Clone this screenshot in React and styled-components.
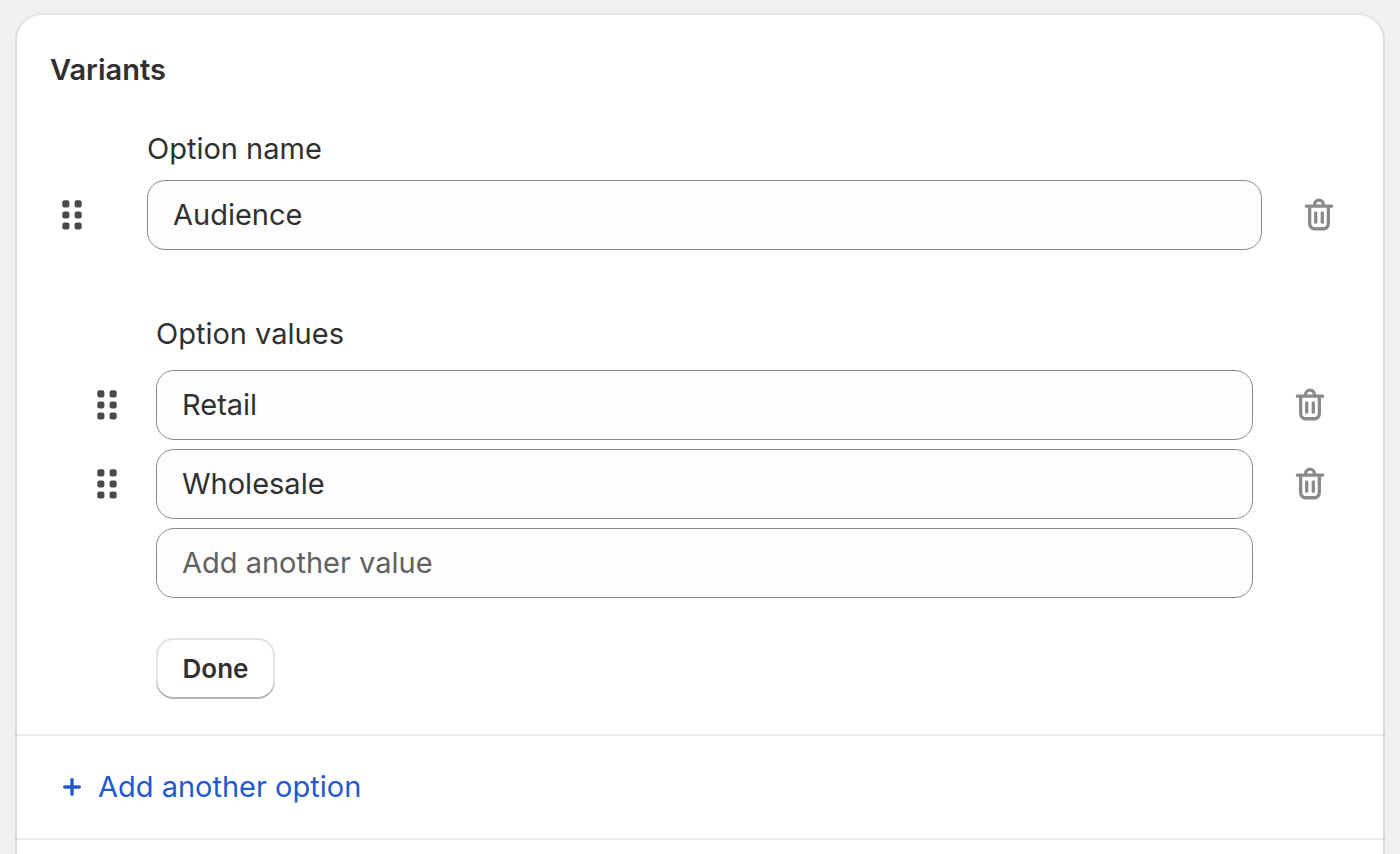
import React from "react";
import styled, { createGlobalStyle } from "styled-components";

const GlobalStyle = createGlobalStyle`
  *, *::before, *::after { box-sizing: border-box; }
  body {
    margin: 0;
    background: #f0f0f0;
    color: #303030;
    font-family: Inter, "Liberation Sans", sans-serif;
    font-size: 29px;
    line-height: 40px;
  }
  button, input { font: inherit; color: inherit; }
`;

const Page = styled.main`
  display: flex;
  min-height: 100vh;
  padding: 13px 15px 0;
`;

const Card = styled.section`
  position: relative;
  flex: 1;
  min-width: 0;
  background: #fff;
  border-radius: 27px 27px 0 0;

  &::after {
    content: "";
    position: absolute;
    inset: 0;
    border: 2px solid rgba(0, 0, 0, 0.13);
    border-top-color: rgba(0, 0, 0, 0.1);
    border-bottom: 0;
    border-radius: inherit;
    pointer-events: none;
  }
`;

const Title = styled.h2`
  margin: 0;
  padding: 37px 35px 0;
  font-size: 29px;
  line-height: 40px;
  font-weight: 600;
`;

const Form = styled.form`
  margin: 0;
  padding-bottom: 35px;
`;

const Group = styled.div`
  display: grid;
  grid-template-columns: 44px minmax(0, 1fr) 44px;
  align-items: center;
  row-gap: ${(p) => (p.$nested ? 9 : 11)}px;
  margin-top: ${(p) => (p.$nested ? 64 : 39)}px;
  padding: ${(p) => (p.$nested ? "0 53px 0 70px" : "0 44px 0 35px")};
`;

const Cell = styled.div`
  grid-column: 2;
  margin-left: ${(p) => (p.$nested ? 27 : 53)}px;
  margin-right: 35px;
`;

const LabelCell = styled(Cell)`
  grid-column: 2 / -1;
`;

const Label = styled.label`
  display: block;
  padding-bottom: ${(p) => (p.$nested ? 7 : 0)}px;
`;

const TextField = styled.input`
  display: block;
  width: 100%;
  height: 70px;
  padding: 0 25px 2px;
  border: 1px solid #8a8a8a;
  border-radius: 18px;
  background: #fdfdfd;
  outline-offset: 2px;

  &::placeholder { color: #616161; opacity: 1; }
`;

const IconButton = styled.button`
  display: block;
  width: 44px;
  height: 44px;
  padding: 0;
  border: 0;
  background: none;
  color: ${(p) => (p.$drag ? "#4a4a4a" : "#8a8a8a")};
  cursor: ${(p) => (p.$drag ? "grab" : "pointer")};

  svg { display: block; }
`;

const DoneButton = styled.button`
  display: block;
  height: 61px;
  min-width: 119px;
  margin: 40px 0 0 141px;
  padding: 0 26px;
  border: 0;
  border-radius: 18px;
  background: #fff;
  box-shadow: inset 0 -2px #b5b5b5, inset 2px 0 #e3e3e3, inset -2px 0 #e3e3e3,
    inset 0 2px #e3e3e3;
  font-size: 26px;
  font-weight: 600;
  cursor: pointer;
`;

const Footer = styled.div`
  padding: 30px 35px;
  border: solid #ebebeb;
  border-width: 2px 0;
`;

const AddOption = styled.button`
  display: flex;
  align-items: center;
  gap: 4px;
  height: 42px;
  padding: 0;
  border: 0;
  background: none;
  color: #2359ce;
  cursor: pointer;
`;

function DragHandle({ name }) {
  return (
    <IconButton type="button" $drag aria-label={`Reorder ${name}`}>
      <svg width="44" height="44" viewBox="0 0 44 44" fill="currentColor" aria-hidden="true">
        {[7.3, 18.4, 29.4].map((y) => (
          <React.Fragment key={y}>
            <rect x="12.3" y={y} width="7.1" height="7.1" rx="2.2" />
            <rect x="24.6" y={y} width="7.1" height="7.1" rx="2.2" />
          </React.Fragment>
        ))}
      </svg>
    </IconButton>
  );
}

function DeleteButton({ name }) {
  return (
    <IconButton type="button" aria-label={`Delete ${name}`}>
      <svg width="44" height="44" viewBox="0 0 20 20" fill="currentColor" aria-hidden="true">
        <path d="M11.5 8.25a.75.75 0 0 1 .75.75v4.25a.75.75 0 0 1-1.5 0v-4.25a.75.75 0 0 1 .75-.75Z" />
        <path d="M9.25 9a.75.75 0 0 0-1.5 0v4.25a.75.75 0 0 0 1.5 0v-4.25Z" />
        <path
          fillRule="evenodd"
          d="M7.25 5.25a2.75 2.75 0 0 1 5.5 0h3a.75.75 0 0 1 0 1.5h-.75v5.45c0 1.68 0 2.52-.327 3.162a3 3 0 0 1-1.311 1.311c-.642.327-1.482.327-3.162.327h-.4c-1.68 0-2.52 0-3.162-.327a3 3 0 0 1-1.311-1.311c-.327-.642-.327-1.482-.327-3.162v-5.45h-.75a.75.75 0 0 1 0-1.5h3Zm1.5 0a1.25 1.25 0 1 1 2.5 0h-2.5Zm-2.25 1.5h7v5.45c0 .865-.001 1.423-.036 1.848-.033.408-.09.559-.128.633a1.5 1.5 0 0 1-.655.655c-.074.038-.225.095-.633.128-.425.035-.983.036-1.848.036h-.4c-.865 0-1.423-.001-1.848-.036-.408-.033-.559-.09-.633-.128a1.5 1.5 0 0 1-.656-.655c-.037-.074-.094-.225-.127-.633-.035-.425-.036-.983-.036-1.848v-5.45Z"
        />
      </svg>
    </IconButton>
  );
}

const values = ["Retail", "Wholesale"];

export default function App() {
  return (
    <>
      <GlobalStyle />
      <Page>
        <Card>
          <Title>Variants</Title>
          <Form onSubmit={(e) => e.preventDefault()}>
            <Group>
              <LabelCell>
                <Label htmlFor="option-name">Option name</Label>
              </LabelCell>
              <DragHandle name="option" />
              <Cell>
                <TextField id="option-name" defaultValue="Audience" />
              </Cell>
              <DeleteButton name="option" />
            </Group>
            <Group $nested>
              <LabelCell $nested>
                <Label $nested htmlFor="value-0">Option values</Label>
              </LabelCell>
              {values.map((value, i) => (
                <React.Fragment key={value}>
                  <DragHandle name={value} />
                  <Cell $nested>
                    <TextField id={`value-${i}`} aria-label={i ? `Option value ${i + 1}` : undefined} defaultValue={value} />
                  </Cell>
                  <DeleteButton name={value} />
                </React.Fragment>
              ))}
              <Cell $nested>
                <TextField aria-label="New option value" placeholder="Add another value" />
              </Cell>
            </Group>
            <DoneButton type="submit">Done</DoneButton>
          </Form>
          <Footer>
            <AddOption type="button">
              <svg width="44" height="44" viewBox="0 0 44 44" fill="none" stroke="currentColor" strokeWidth="3.4" strokeLinecap="round" aria-hidden="true">
                <path d="M22 14.7v14.6M14.7 22h14.6" />
              </svg>
              Add another option
            </AddOption>
          </Footer>
        </Card>
      </Page>
    </>
  );
}
